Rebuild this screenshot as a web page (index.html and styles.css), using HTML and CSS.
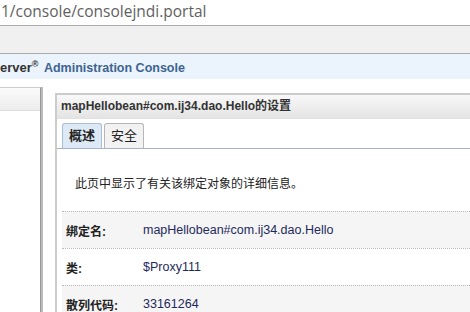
FILE: index.html
```html
<!DOCTYPE html>
<html lang="zh">
  <head>
    <meta charset="UTF-8" />
    <title>JNDI 设置</title>
    <link rel="stylesheet" href="styles.css">
  </head>
  <body>
    <div class="urlbar">1/console/consolejndi.portal</div>
    <div class="toolbar"></div>
    <div class="header">
      <span class="product">erver<sup>®</sup></span>
      <span class="console">Administration Console</span>
    </div>

    <div class="main">
      <div class="side">
        <div class="side-head"></div>
      </div>

      <div class="panel">
        <div class="panel-title">mapHellobean#com.ij34.dao.Hello的设置</div>
        <div class="tabs">
          <div class="tab active">概述</div>
          <div class="tab">安全</div>
        </div>
        <p class="intro">此页中显示了有关该绑定对象的详细信息。</p>
        <div class="props">
          <div class="row">
            <div class="label">绑定名:</div>
            <div class="value">mapHellobean#com.ij34.dao.Hello</div>
          </div>
          <div class="row">
            <div class="label">类:</div>
            <div class="value">$Proxy111</div>
          </div>
          <div class="row">
            <div class="label">散列代码:</div>
            <div class="value">33161264</div>
          </div>
        </div>
      </div>
    </div>
  </body>
</html>
```

FILE: styles.css
```css
body {
  margin: 0;
  font-family: "Liberation Sans", "Noto Sans CJK SC", sans-serif;
  background: white;
  height: 312px;
  overflow: hidden;
}

.urlbar {
  height: 26px;
  box-sizing: border-box;
  padding-left: 1px;
  font-family: "Open Sans", "Noto Sans", sans-serif;
  font-size: 15.5px;
  line-height: 23px;
  color: #5f5f5f;
  border-bottom: 1px solid #aaa;
}
.toolbar {
  height: 27px;
  background: #f0f0f0;
  border-bottom: 1px solid #aaa;
}
.header {
  height: 25px;
  background: #ebf3fd;
  line-height: 28px;
  font-size: 12.5px;
  white-space: nowrap;
}
.header .product {
  font-weight: bold;
  color: #333;
  font-size: 13px;
}
.header sup {
  font-size: 9px;
  line-height: 0;
}
.header .console {
  color: #3d6490;
  font-weight: bold;
  margin-left: 2px;
}

.main {
  display: flex;
  gap: 14px;
  padding-top: 8px;
}
.side {
  width: 40px;
  height: 230px;
  border-top: 1px solid #ccc;
  border-right: 1px solid #999;
  box-shadow: 2px 0 0 #bbb;
}
.side-head {
  height: 22px;
  border-bottom: 1px solid #ddd;
  background: linear-gradient(#fafafa, #ececec);
}

.panel {
  flex: 1;
  margin-top: 6px;
  border-top: 2px solid #ccc;
  border-left: 2px solid #ccc;
}
.panel-title {
  height: 23px;
  padding-left: 4px;
  font-weight: bold;
  font-size: 12px;
  line-height: 23px;
  color: #333;
  white-space: nowrap;
  background: linear-gradient(#f8f8f8, #e4e4e4);
  border-bottom: 1px solid #e0e0e0;
}
.tabs {
  display: flex;
  gap: 2px;
  padding: 4px 0 0 5px;
  border-bottom: 1px solid #a4b4cc;
}
.tab {
  width: 38px;
  height: 24px;
  line-height: 24px;
  text-align: center;
  font-size: 13px;
  color: #222;
  background: #f2f2f2;
  border: 1px solid #b7b7b7;
  border-bottom: none;
  border-radius: 3px 3px 0 0;
}
.tab.active {
  background: #dde9f4;
  border-color: #a9bfd8;
  font-weight: bold;
}

.intro {
  margin: 25px 0 0 18px;
  font-size: 12px;
  color: #222;
}
.props {
  margin: 20px 0 0 5px;
}
.row {
  display: flex;
  height: 36px;
  align-items: center;
  border-top: 1px dotted #bbb;
  font-size: 12px;
  color: #222;
}
.row:nth-child(odd) {
  background: #f5f5f5;
}
.label {
  width: 77px;
  padding-left: 4px;
  font-weight: bold;
}
.value {
  color: #1e2a5a;
  font-size: 12.5px;
}
```
